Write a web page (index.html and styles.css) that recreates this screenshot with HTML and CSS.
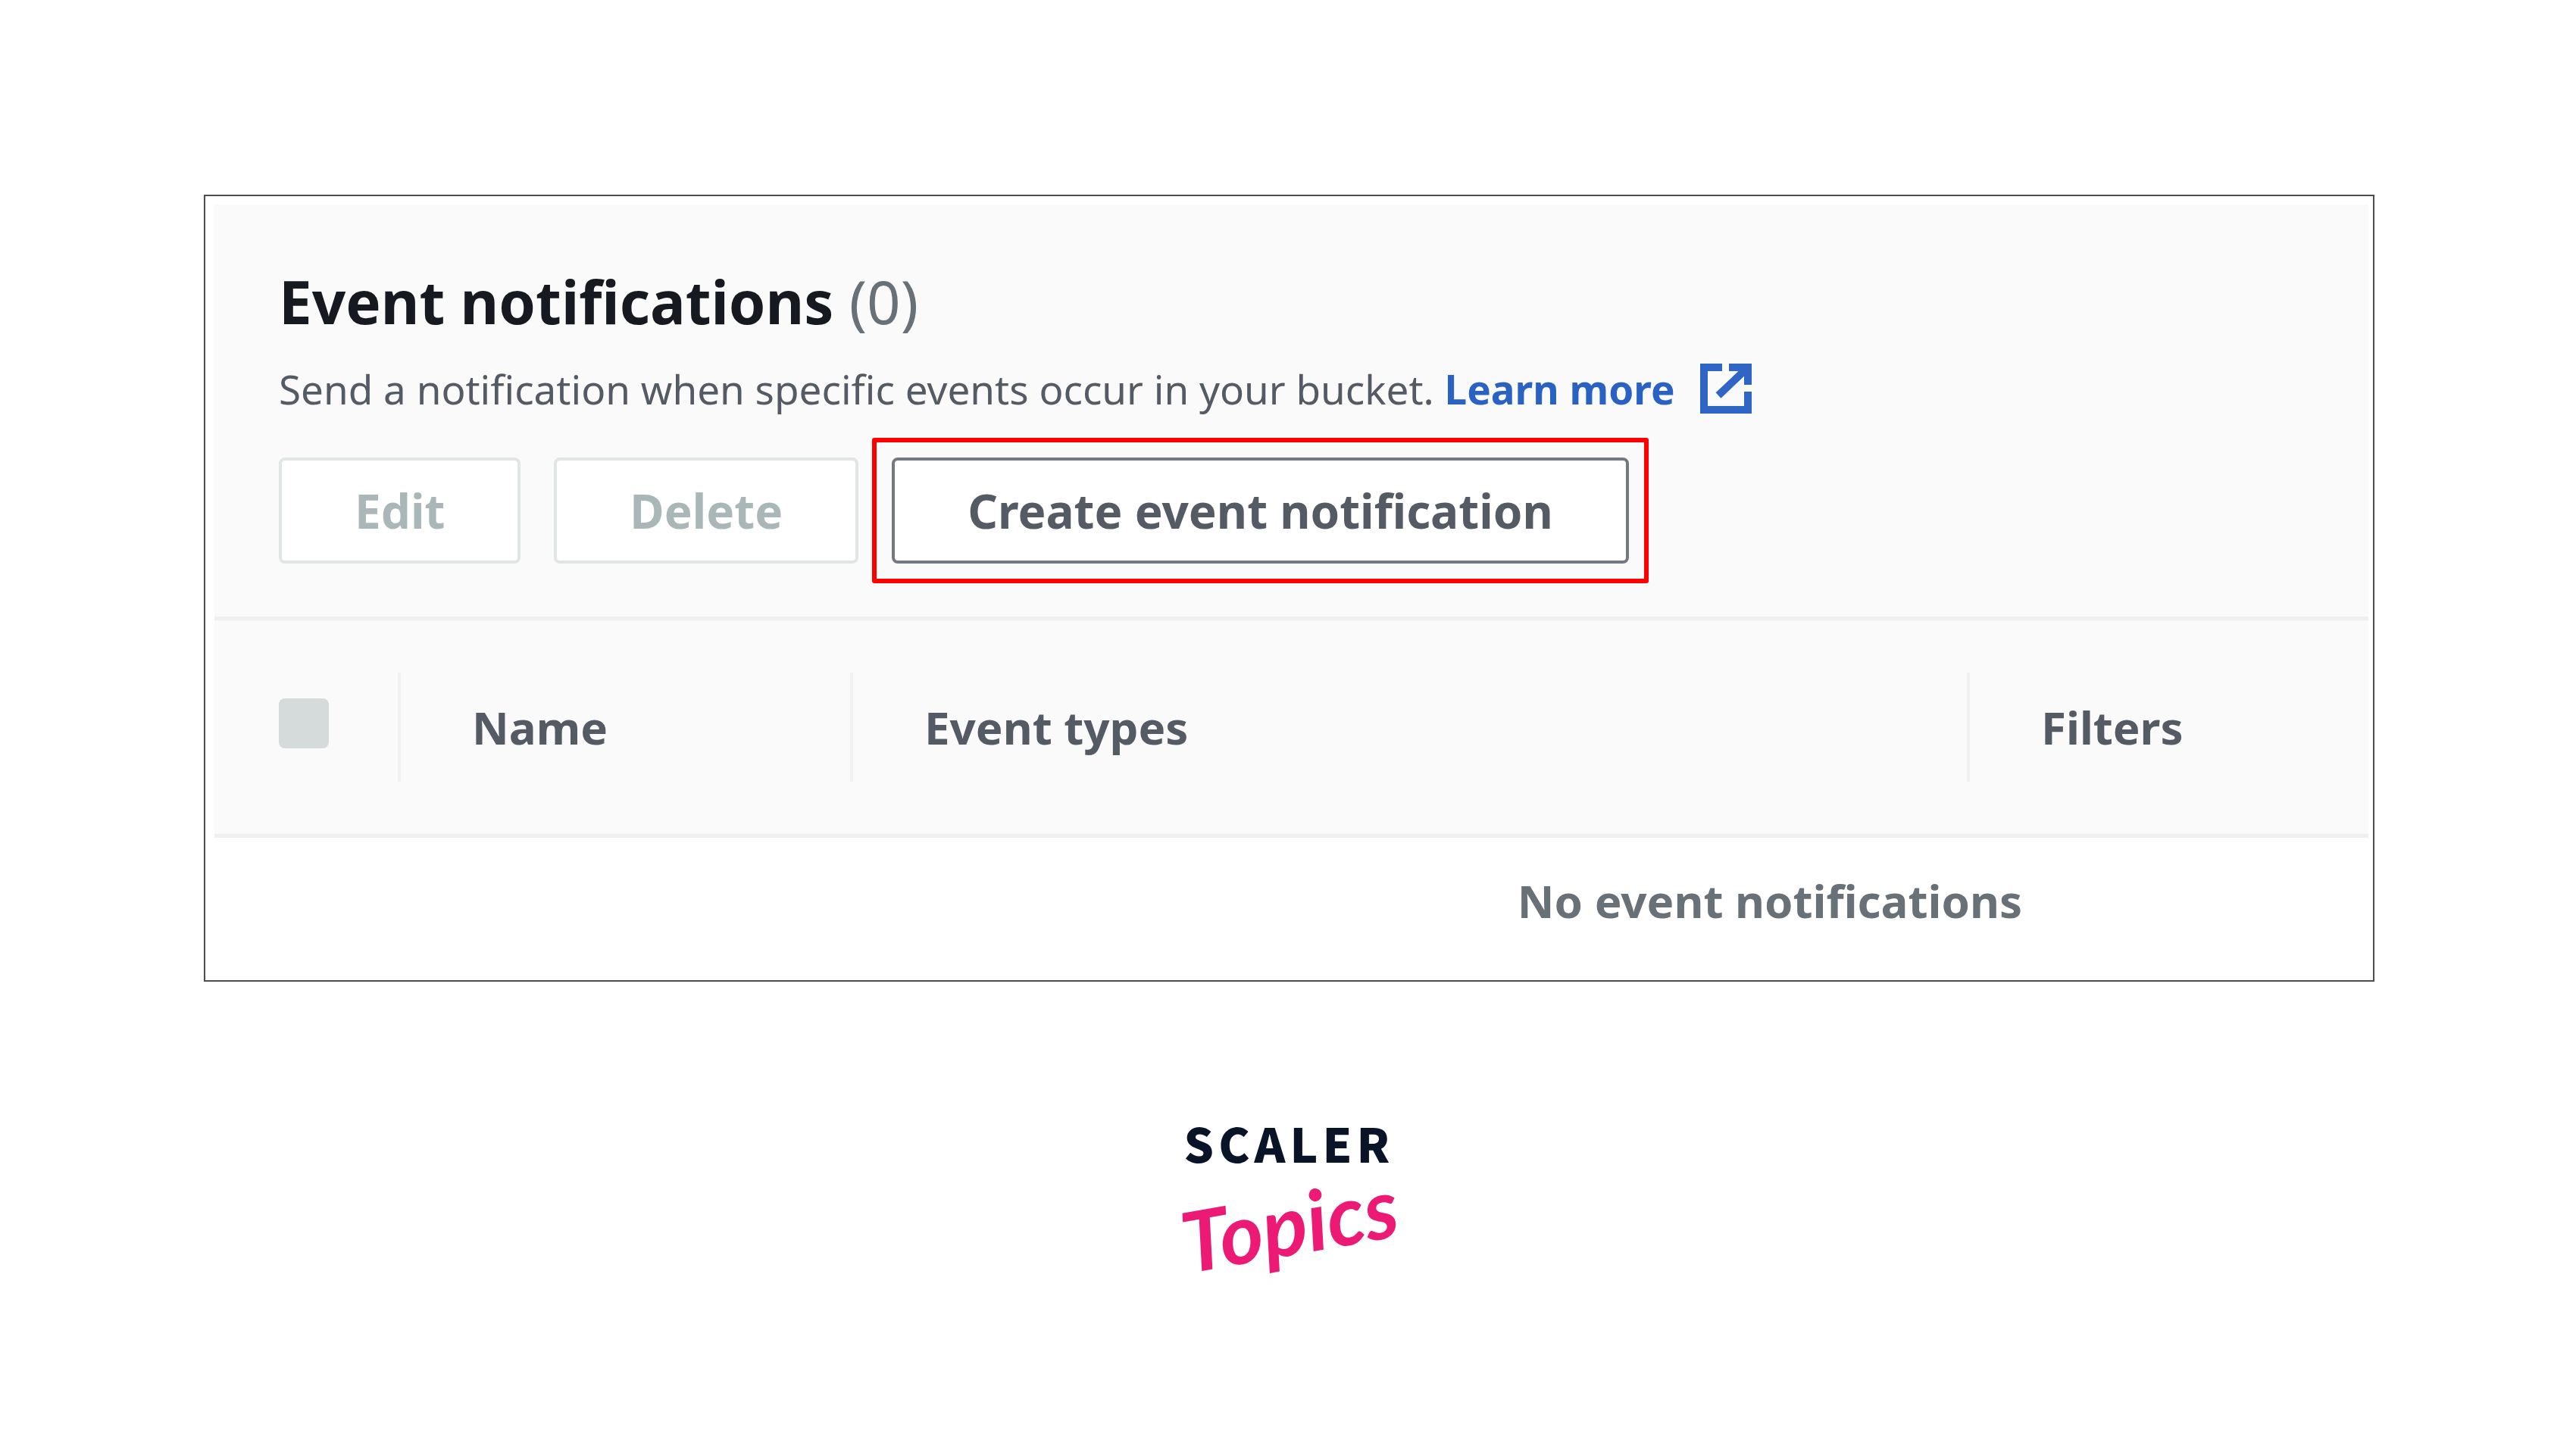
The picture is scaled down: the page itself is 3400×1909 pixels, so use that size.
FILE: index.html
```html
<!DOCTYPE html>
<html lang="en">
<head>
    <meta charset="utf-8">
    <title>Event notifications</title>
    <link rel="stylesheet" href="styles.css">
</head>
<body>
    <main class="card">
        <section class="panel">
            <div class="panel-header">
                <h1 class="title">Event notifications <span class="count">(0)</span></h1>
                <p class="description">
                    Send a notification when specific events occur in your bucket.
                    <a class="learn-more" href="#">Learn more
                        <svg class="external" viewBox="0 0 68 66" aria-hidden="true">
                            <path d="M29 5H5v56h58V37"/>
                            <path d="M38 5h25v23M63 5L24 42"/>
                        </svg>
                    </a>
                </p>
                <div class="actions">
                    <button class="button" disabled>Edit</button>
                    <button class="button" disabled>Delete</button>
                    <div class="highlight">
                        <button class="button button-create">Create event notification</button>
                    </div>
                </div>
            </div>

            <table class="events">
                <thead>
                    <tr>
                        <th class="col-check"><div class="cell"><input type="checkbox" class="checkbox" aria-label="Select all" disabled></div></th>
                        <th class="col-name"><div class="cell">Name</div></th>
                        <th class="col-types"><div class="cell">Event types</div></th>
                        <th><div class="cell">Filters</div></th>
                    </tr>
                </thead>
                <tbody>
                    <tr>
                        <td class="empty" colspan="4">No event notifications</td>
                    </tr>
                </tbody>
            </table>
        </section>
    </main>

    <footer class="logo">
        <div class="logo-name">SCALER</div>
        <div class="logo-script">Topics</div>
    </footer>
</body>
</html>
```
FILE: styles.css
```css
* {
    box-sizing: border-box;
}

body {
    margin: 0;
    padding: 257px 266px 0 269px;
    background: #fff;
    color: #545b64;
    font-family: "Noto Sans", "Open Sans", sans-serif;
}

.card {
    padding: 11px 6px 0 12px;
    border: 2px solid #4d4d4d;
}

/* the table is wider than the card, the rest of it is cut off */
.panel {
    overflow: hidden;
}

.panel-header {
    padding: 78px 85px 70px;
    background: #fafafa;
}

.title {
    margin: 0;
    color: #16191f;
    font-size: 78px;
    line-height: 100px;
}

.count {
    color: #687078;
    font-weight: normal;
}

.description {
    margin: 26px 0 50px;
    font-size: 53px;
    line-height: 80px;
}

.learn-more {
    color: #2a62c4;
    font-weight: bold;
    text-decoration: none;
}

.external {
    width: 68px;
    height: 66px;
    margin-left: 20px;
    vertical-align: -12px;
    fill: none;
    stroke: #2f66c5;
    stroke-width: 10;
}

.actions {
    display: flex;
    gap: 44px;
}

.button {
    height: 140px;
    padding: 0 96px;
    border: 4px solid #e1e5e5;
    border-radius: 8px;
    background: #fff;
    color: #aab7b8;
    font-family: inherit;
    font-size: 62px;
    font-weight: bold;
}

.button-create {
    border-color: #747981;
    color: #545b64;
}

.highlight {
    position: relative;
}

.highlight::after {
    content: "";
    position: absolute;
    inset: -26px;
    border: 6px solid #f00;
    border-radius: 3px;
    pointer-events: none;
}

.events {
    width: calc(144% + 12px);
    table-layout: fixed;
    border-collapse: collapse;
    font-size: 60px;
}

.events th {
    padding: 69px 0;
    border-top: 5px solid #efefef;
    border-bottom: 5px solid #efefef;
    background: #fafafa;
    text-align: left;
}

.col-check {
    width: 246px;
}

.col-name {
    width: 597px;
}

.col-types {
    width: 1474px;
}

.cell {
    height: 144px;
    padding-left: 94px;
    border-right: 4px solid #f0f2f2;
    line-height: 144px;
}

.col-check .cell {
    display: flex;
    align-items: center;
    padding: 0 0 10px 85px;
}

.checkbox {
    appearance: none;
    width: 66px;
    height: 66px;
    margin: 0;
    border-radius: 8px;
    background: #d5dbdb;
}

.empty {
    height: 190px;
    padding: 0 0 22px;
    color: #687078;
    font-weight: bold;
    text-align: center;
}

.logo {
    margin-top: 176px;
    text-align: center;
}

.logo-name {
    color: #0a1428;
    font-family: "Noto Sans CJK SC", sans-serif;
    font-size: 62px;
    font-weight: 900;
    letter-spacing: 6px;
    line-height: 72px;
}

.logo-script {
    color: #ec1a75;
    font-family: Lato, sans-serif;
    font-size: 110px;
    font-style: italic;
    font-weight: bold;
    line-height: 140px;
    transform: rotate(-10deg);
}
```
